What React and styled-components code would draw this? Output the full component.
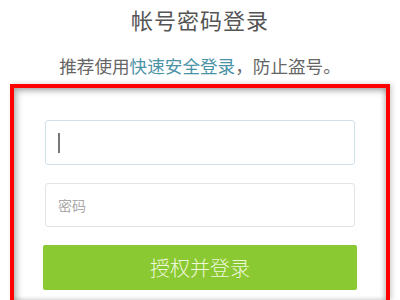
import React from "react";
import styled, { createGlobalStyle } from "styled-components";

const Global = createGlobalStyle`
  html, body {
    margin: 0;
    padding: 0;
    background: #ffffff;
    font-family: "Noto Sans CJK SC", "Noto Sans", sans-serif;
  }
`;

const Page = styled.div`
  width: 400px;
  height: 300px;
  overflow: hidden;
  display: flex;
  flex-direction: column;
  align-items: center;
`;

const Title = styled.h1`
  margin: 6px 0 0;
  font-size: 22px;
  line-height: 26px;
  font-weight: 400;
  letter-spacing: 1px;
  color: #555;
`;

const Hint = styled.p`
  margin: 23px 0 0;
  font-size: 17.6px;
  line-height: 22px;
  color: #666;

  a {
    color: #4a92a6;
    text-decoration: none;
  }
`;

const Frame = styled.div`
  box-sizing: border-box;
  width: 380px;
  margin-top: 7px;
  flex: 1;
  border: 4px solid #ff0000;
  border-bottom: none;
  box-shadow: inset 3px 3px 6px rgba(0, 0, 0, 0.28), inset -2px 0 5px rgba(0, 0, 0, 0.2),
    2px 0 5px rgba(0, 0, 0, 0.18);
  padding: 32px 31px 0;
  display: flex;
  flex-direction: column;
  gap: 18px;
`;

const Field = styled.div`
  box-sizing: border-box;
  height: ${p => p.h}px;
  border: 1px solid ${p => (p.focused ? "#cfdfea" : "#e0e4e8")};
  border-radius: 3px;
  background: #fff;
  display: flex;
  align-items: center;
  padding-left: 12px;
  font-size: 14px;
  color: #aaa;
`;

const Caret = styled.span`
  width: 2px;
  height: 20px;
  background: #777;
`;

const Submit = styled.button`
  height: 45px;
  margin: 0 -2px;
  border: none;
  border-radius: 2px;
  background: #8bc933;
  color: #eef8dc;
  font-family: inherit;
  font-size: 20px;
  font-weight: 300;
`;

export default function App() {
  return (
    <Page>
      <Global />
      <Title>帐号密码登录</Title>
      <Hint>
        推荐使用<a href="#">快速安全登录</a>，防止盗号。
      </Hint>
      <Frame>
        <Field h={45} focused>
          <Caret />
        </Field>
        <Field h={44}>密码</Field>
        <Submit>授权并登录</Submit>
      </Frame>
    </Page>
  );
}
